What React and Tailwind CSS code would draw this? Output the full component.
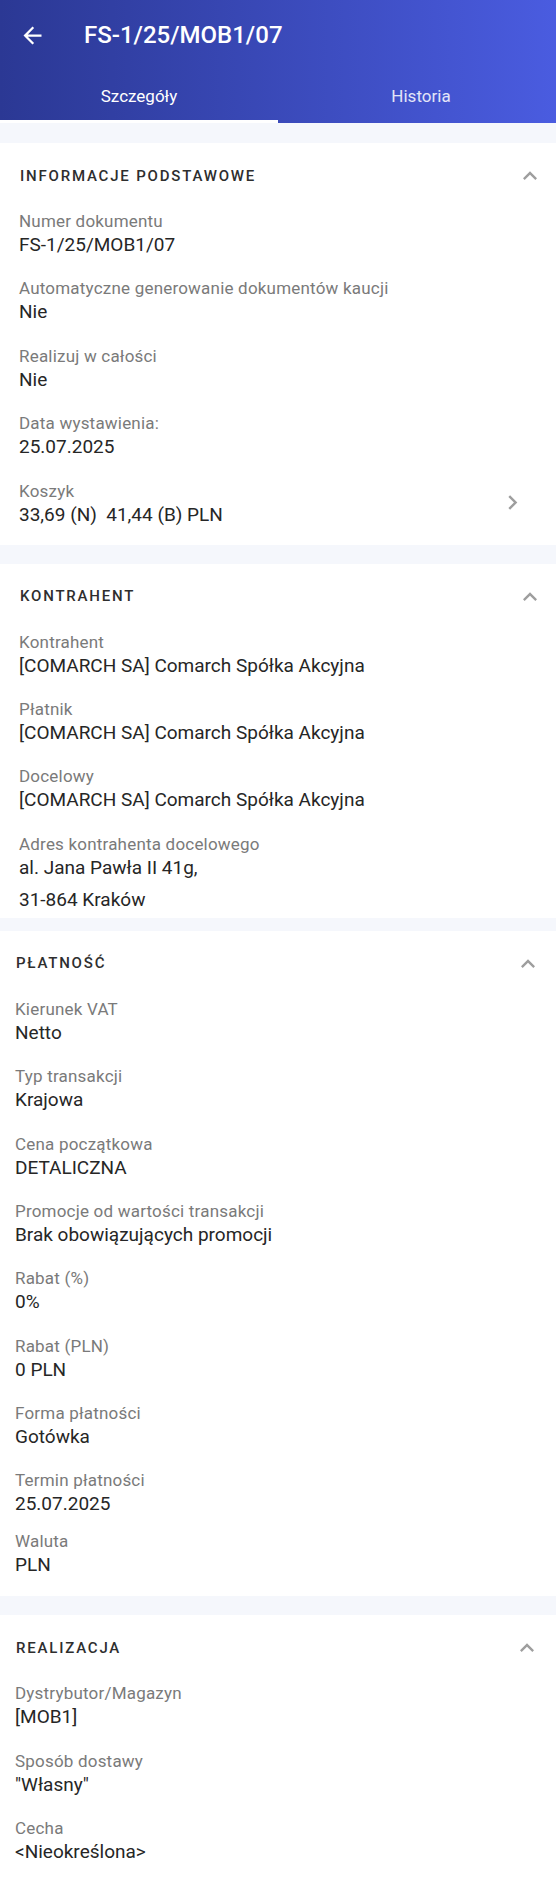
import React from 'react';

const sections = [
    {
        title: 'Informacje podstawowe',
        pad: 'px-[19px]',
        chev: 'pr-[12px]',
        pb: 'pb-[18px]',
        rows: [
            { label: 'Numer dokumentu', value: 'FS-1/25/MOB1/07' },
            { label: 'Automatyczne generowanie dokumentów kaucji', value: 'Nie' },
            { label: 'Realizuj w całości', value: 'Nie' },
            { label: 'Data wystawienia:', value: '25.07.2025' },
            { label: 'Koszyk', value: '33,69 (N)  41,44 (B) PLN', link: true },
        ],
    },
    {
        title: 'Kontrahent',
        pad: 'px-[19px]',
        chev: 'pr-[12px]',
        pb: 'pb-[6px]',
        rows: [
            { label: 'Kontrahent', value: '[COMARCH SA] Comarch Spółka Akcyjna' },
            { label: 'Płatnik', value: '[COMARCH SA] Comarch Spółka Akcyjna' },
            { label: 'Docelowy', value: '[COMARCH SA] Comarch Spółka Akcyjna' },
            { label: 'Adres kontrahenta docelowego', value: 'al. Jana Pawła II 41g,', value2: '31-864 Kraków' },
        ],
    },
    {
        title: 'Płatność',
        pad: 'px-[15px]',
        chev: 'pr-[14px]',
        pb: 'pb-[19px]',
        rows: [
            { label: 'Kierunek VAT', value: 'Netto' },
            { label: 'Typ transakcji', value: 'Krajowa' },
            { label: 'Cena początkowa', value: 'DETALICZNA' },
            { label: 'Promocje od wartości transakcji', value: 'Brak obowiązujących promocji' },
            { label: 'Rabat (%)', value: '0%' },
            { label: 'Rabat (PLN)', value: '0 PLN' },
            { label: 'Forma płatności', value: 'Gotówka' },
            { label: 'Termin płatności', value: '25.07.2025' },
            { label: 'Waluta', value: 'PLN', tight: true },
        ],
    },
    {
        title: 'Realizacja',
        pad: 'px-[15px]',
        chev: 'pr-[15px]',
        pb: 'pb-[30px]',
        rows: [
            { label: 'Dystrybutor/Magazyn', value: '[MOB1]' },
            { label: 'Sposób dostawy', value: '"Własny"' },
            { label: 'Cecha', value: '<Nieokreślona>' },
        ],
    },
];

function ArrowBack() {
    return (
        <svg width="27" height="27" viewBox="0 0 24 24" fill="#ffffff">
            <path d="M20 11H7.83l5.59-5.59L12 4l-8 8 8 8 1.41-1.41L7.83 13H20v-2z" />
        </svg>
    );
}

function ExpandLess() {
    return (
        <svg width="28" height="28" viewBox="0 0 24 24" fill="#9e9e9e">
            <path d="M12 8l-6 6 1.41 1.41L12 10.83l4.59 4.58L18 14z" />
        </svg>
    );
}

function ChevronRight() {
    return (
        <svg width="29" height="29" viewBox="0 0 24 24" fill="#9e9e9e">
            <path d="M10 6L8.59 7.41 13.17 12l-4.58 4.59L10 18l6-6z" />
        </svg>
    );
}

function Row({ row }) {
    return (
        <div className={`flex items-center ${row.tight ? 'mt-[13px]' : 'mt-[19.4px]'} first:mt-0`}>
            <div className='flex-1'>
                <div className='text-[17px] leading-[24px] tracking-[0.2px] text-[#7a7a7a]'>{row.label}</div>
                <div className='text-[19px] leading-[24px] text-[#262626] whitespace-pre'>{row.value}</div>
                {row.value2 && (
                    <div className='text-[19px] leading-[24px] mt-[8px] text-[#262626]'>{row.value2}</div>
                )}
            </div>
            {row.link && (
                <div className='mr-[10px]'>
                    <ChevronRight />
                </div>
            )}
        </div>
    );
}

function Section({ s }) {
    return (
        <div className={`bg-white ${s.pb}`}>
            <div className={`h-[66px] flex items-center justify-between ${s.pad} ${s.chev}`}>
                <h2 className='text-[15px] font-medium uppercase tracking-[1.8px] text-[#2e2e2e] pl-[1px]'>{s.title}</h2>
                <ExpandLess />
            </div>
            <div className={`flex flex-col ${s.pad}`}>
                {s.rows.map((r) => (
                    <Row key={r.label} row={r} />
                ))}
            </div>
        </div>
    );
}

export default function App() {
    return (
        <div className="min-h-screen bg-white font-['Roboto','Liberation_Sans',sans-serif]">

            {/* toolbar + tabs */}
            <div className='h-[123px] bg-gradient-to-r from-[#2b3894] to-[#4a5ce0] flex flex-col text-white'>
                <div className='h-[70px] flex items-center'>
                    <div className='ml-[19px] flex items-center'>
                        <ArrowBack />
                    </div>
                    <h1 className='ml-[38px] text-[24px] font-medium leading-none'>FS-1/25/MOB1/07</h1>
                </div>
                <div className='flex-1 grid grid-cols-2'>
                    <div className='flex flex-col'>
                        <div className='flex-1 flex items-center justify-center text-[17px] text-white pt-[4px]'>Szczegóły</div>
                        <div className='h-[3px] bg-white'></div>
                    </div>
                    <div className='flex items-center justify-center text-[17px] text-white/85 pl-[8px] pt-[1px]'>Historia</div>
                </div>
            </div>

            <div className='bg-[#f5f7fc] pt-[20px] flex flex-col'>
                <Section s={sections[0]} />
                <div className='h-[19px]'></div>
                <Section s={sections[1]} />
                <div className='h-[13px]'></div>
                <Section s={sections[2]} />
                <div className='h-[19px]'></div>
                <Section s={sections[3]} />
            </div>
        </div>
    );
}
